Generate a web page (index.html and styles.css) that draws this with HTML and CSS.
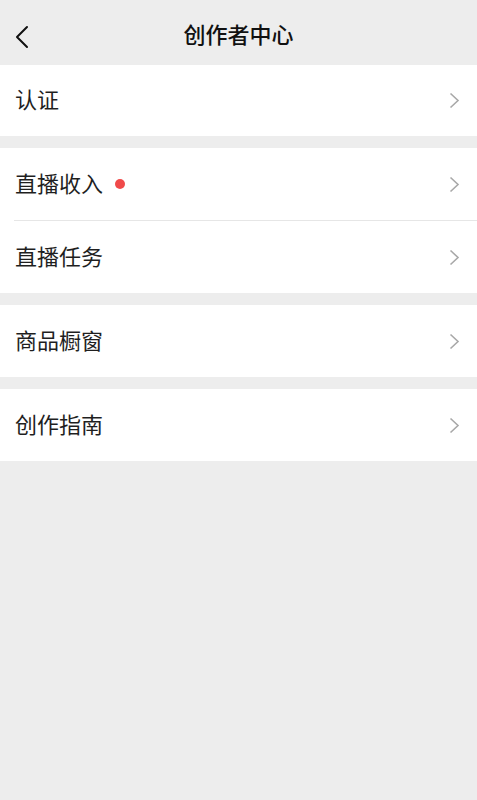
FILE: index.html
```html
<!DOCTYPE html>
<html lang="zh-CN">
<head>
<meta charset="utf-8">
<title>创作者中心</title>
<link rel="stylesheet" href="styles.css">
</head>
<body>
<header class="nav">
  <span class="back">
    <svg width="14" height="24" viewBox="0 0 14 24"><path d="M12 2 L2 12 L12 22" fill="none" stroke="#111" stroke-width="2" stroke-linecap="round" stroke-linejoin="round"/></svg>
  </span>
  <h1 class="title">创作者中心</h1>
</header>
<main class="list">
  <section class="group">
    <div class="row row-first"><span class="label">认证</span><span class="chev"><svg width="11" height="17" viewBox="0 0 11 17"><path d="M1.5 1.5 L9 8.5 L1.5 15.5" fill="none" stroke="#a8a8a8" stroke-width="1.6"/></svg></span></div>
  </section>
  <section class="group">
    <div class="row"><span class="label">直播收入<i class="dot"></i></span><span class="chev"><svg width="11" height="17" viewBox="0 0 11 17"><path d="M1.5 1.5 L9 8.5 L1.5 15.5" fill="none" stroke="#a8a8a8" stroke-width="1.6"/></svg></span></div>
    <div class="row"><span class="label">直播任务</span><span class="chev"><svg width="11" height="17" viewBox="0 0 11 17"><path d="M1.5 1.5 L9 8.5 L1.5 15.5" fill="none" stroke="#a8a8a8" stroke-width="1.6"/></svg></span></div>
  </section>
  <section class="group">
    <div class="row"><span class="label">商品橱窗</span><span class="chev"><svg width="11" height="17" viewBox="0 0 11 17"><path d="M1.5 1.5 L9 8.5 L1.5 15.5" fill="none" stroke="#a8a8a8" stroke-width="1.6"/></svg></span></div>
  </section>
  <section class="group">
    <div class="row"><span class="label">创作指南</span><span class="chev"><svg width="11" height="17" viewBox="0 0 11 17"><path d="M1.5 1.5 L9 8.5 L1.5 15.5" fill="none" stroke="#a8a8a8" stroke-width="1.6"/></svg></span></div>
  </section>
</main>
</body>
</html>
```
FILE: styles.css
```css
html, body {
  margin: 0;
  padding: 0;
  background: #ededed;
  font-family: "Noto Sans CJK SC", "Noto Sans", sans-serif;
  color: #1a1a1a;
}
.nav {
  height: 65px;
  display: flex;
  align-items: center;
  justify-content: center;
  position: relative;
  box-sizing: border-box;
  padding-top: 8px;
}
.back {
  position: absolute;
  left: 15px;
  top: 25px;
  display: flex;
}
.title {
  margin: 0;
  font-size: 22px;
  font-weight: 500;
  color: #111;
  line-height: 1;
  padding-bottom: 7px;
}
.list {
  display: flex;
  flex-direction: column;
  gap: 12px;
}
.group {
  background: #fff;
  display: flex;
  flex-direction: column;
}
.row {
  height: 72px;
  display: flex;
  align-items: center;
  justify-content: space-between;
  padding: 0 17px 0 15px;
  position: relative;
}
.row-first {
  height: 71px;
}
.row + .row {
  border-top: 1px solid #e6e6e6;
  margin-left: 14px;
  padding-left: 1px;
}
.label {
  font-size: 22px;
  line-height: 1;
  padding-bottom: 5px;
  display: flex;
  align-items: center;
  color: #1f1f1f;
}
.dot {
  width: 10px;
  height: 10px;
  border-radius: 50%;
  background: #f04a4a;
  margin-left: 12px;
  margin-top: 4px;
}
.chev {
  display: flex;
}
```
